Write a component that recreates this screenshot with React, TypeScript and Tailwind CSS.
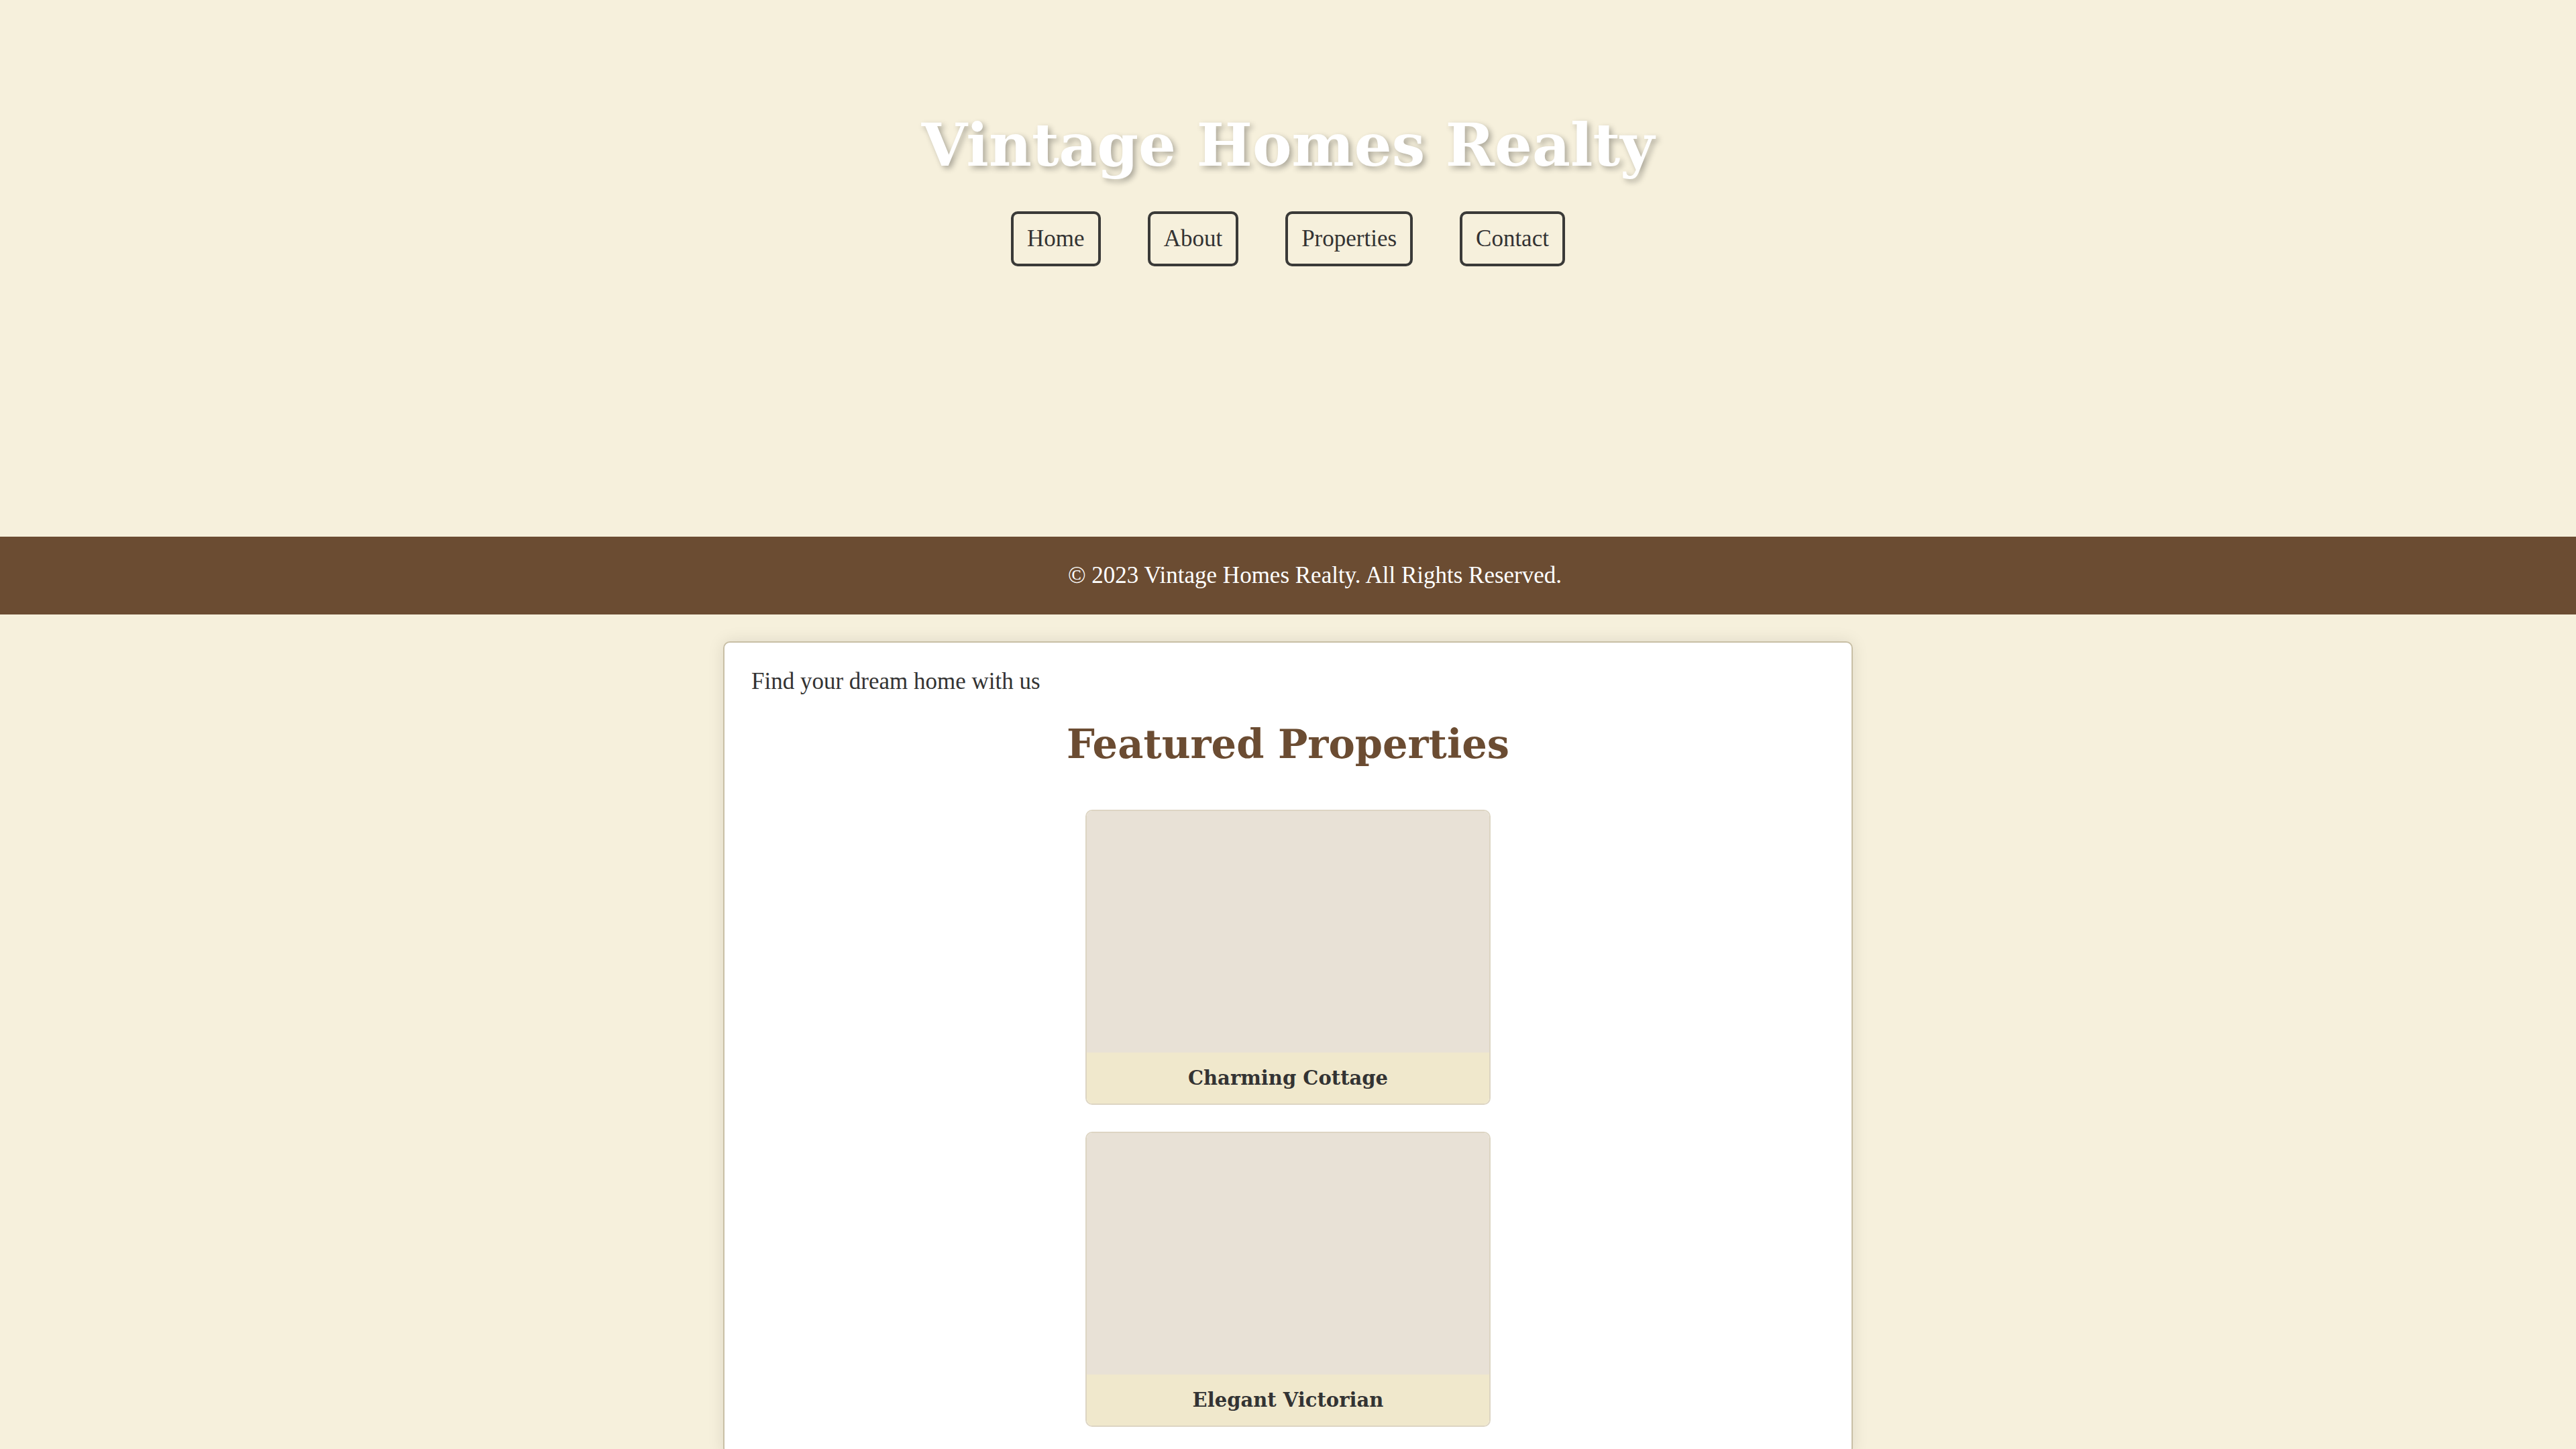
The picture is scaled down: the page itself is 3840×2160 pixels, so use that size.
import React from "react";

const regular = "font-['Liberation_Serif','Times_New_Roman',serif]";
const bold = "font-['DejaVu_Serif',Georgia,serif] font-bold";

const navItems = ["Home", "About", "Properties", "Contact"];
const properties = ["Charming Cottage", "Elegant Victorian"];

export default function App() {
  return (
    <div className={`min-h-screen bg-[#f6f0dc] text-[#333333] ${regular}`}>
      <header className="h-[800px] pt-[162px] text-center">
        <h1
          className={`${bold} text-[88px] leading-[109px] text-white [text-shadow:4px_4px_8px_rgba(0,0,0,0.3)]`}
        >
          Vintage Homes Realty
        </h1>
        <nav className="mt-[44px] flex justify-center gap-[70px]">
          {navItems.map((item) => (
            <a
              key={item}
              href="#"
              className="flex h-[82px] items-center rounded-[10px] border-[4px] border-[#3a3a38] px-[20px] text-[35px] leading-[36px] text-[#333333]"
            >
              {item}
            </a>
          ))}
        </nav>
      </header>

      <footer className="bg-[#6b4c32] py-[40px] pl-[80px] text-center text-[35px] leading-[36px] text-white">
        © 2023 Vintage Homes Realty. All Rights Reserved.
      </footer>

      <main className="mx-auto mt-[40px] w-[1684px] rounded-[10px] border-2 border-[#c8bfa5] bg-white p-[40px] shadow-[0_0_24px_rgba(0,0,0,0.1)]">
        <p className="text-[35px] leading-[36px]">Find your dream home with us</p>
        <h2 className={`${bold} mt-[39px] text-center text-[59px] leading-[73px] text-[#6b4c32]`}>
          Featured Properties
        </h2>
        <div className="mt-[61px] flex flex-col items-center gap-[40px]">
          {properties.map((name) => (
            <div
              key={name}
              className="w-[604px] overflow-hidden rounded-[10px] border-2 border-[#ddd5c3]"
            >
              <div className="h-[360px] bg-[#e8e1d6]" />
              <div className={`${bold} bg-[#f0e8cc] py-[20px] text-center text-[29px] leading-[36px] text-[#333333]`}>
                {name}
              </div>
            </div>
          ))}
        </div>
      </main>
    </div>
  );
}
